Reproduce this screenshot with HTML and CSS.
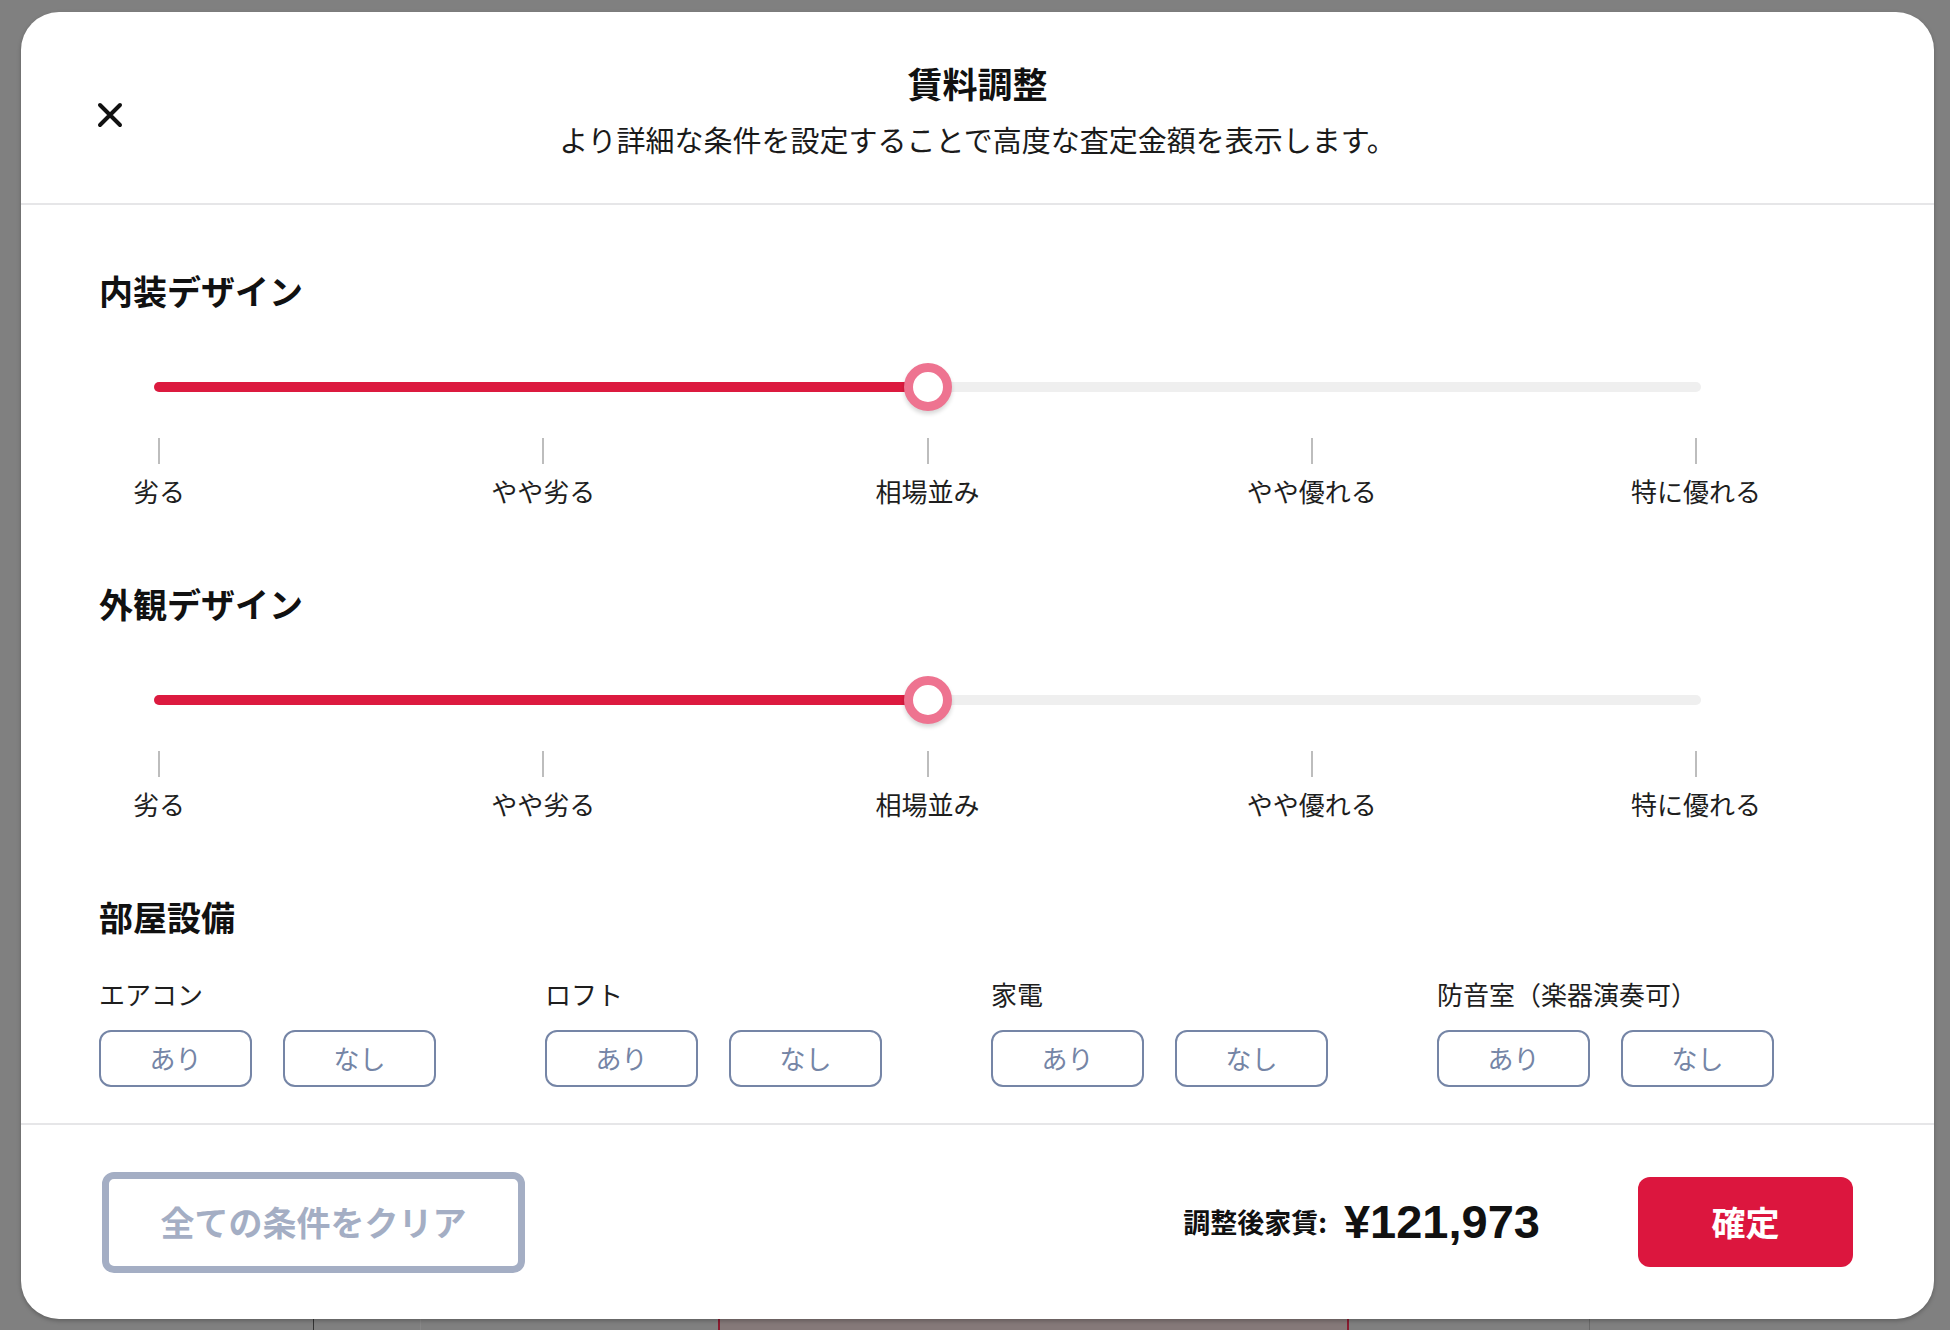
FILE: index.html
```html
<!DOCTYPE html>
<html lang="ja">
<head>
<meta charset="utf-8">
<title>賃料調整</title>
<link rel="stylesheet" href="styles.css">
</head>
<body>
<div class="overlay">
  <div class="modal">
    <header class="modal-header">
      <button class="close-btn" aria-label="閉じる">
        <svg width="26" height="26" viewBox="0 0 26 26"><path d="M3 3 L23 23 M23 3 L3 23" stroke="#111" stroke-width="4" stroke-linecap="round" fill="none"/></svg>
      </button>
      <div class="header-text">
        <h1 class="title">賃料調整</h1>
        <p class="subtitle">より詳細な条件を設定することで高度な査定金額を表示します。</p>
      </div>
      <div class="header-spacer"></div>
    </header>

    <main class="modal-body">
      <section class="section">
        <h2 class="section-title">内装デザイン</h2>
        <div class="slider">
          <div class="track"><div class="fill" style="width:50%"></div></div>
          <div class="thumb" style="left:50%"></div>
        </div>
        <div class="ticks">
          <div class="tick"><span class="tick-line"></span><span class="tick-label">劣る</span></div>
          <div class="tick"><span class="tick-line"></span><span class="tick-label">やや劣る</span></div>
          <div class="tick"><span class="tick-line"></span><span class="tick-label">相場並み</span></div>
          <div class="tick"><span class="tick-line"></span><span class="tick-label">やや優れる</span></div>
          <div class="tick"><span class="tick-line"></span><span class="tick-label">特に優れる</span></div>
        </div>
      </section>

      <section class="section">
        <h2 class="section-title">外観デザイン</h2>
        <div class="slider">
          <div class="track"><div class="fill" style="width:50%"></div></div>
          <div class="thumb" style="left:50%"></div>
        </div>
        <div class="ticks">
          <div class="tick"><span class="tick-line"></span><span class="tick-label">劣る</span></div>
          <div class="tick"><span class="tick-line"></span><span class="tick-label">やや劣る</span></div>
          <div class="tick"><span class="tick-line"></span><span class="tick-label">相場並み</span></div>
          <div class="tick"><span class="tick-line"></span><span class="tick-label">やや優れる</span></div>
          <div class="tick"><span class="tick-line"></span><span class="tick-label">特に優れる</span></div>
        </div>
      </section>

      <section class="section">
        <h2 class="section-title">部屋設備</h2>
        <div class="equip-grid">
          <div class="equip">
            <div class="equip-label">エアコン</div>
            <div class="equip-btns"><button class="opt">あり</button><button class="opt">なし</button></div>
          </div>
          <div class="equip">
            <div class="equip-label">ロフト</div>
            <div class="equip-btns"><button class="opt">あり</button><button class="opt">なし</button></div>
          </div>
          <div class="equip">
            <div class="equip-label">家電</div>
            <div class="equip-btns"><button class="opt">あり</button><button class="opt">なし</button></div>
          </div>
          <div class="equip">
            <div class="equip-label">防音室（楽器演奏可）</div>
            <div class="equip-btns"><button class="opt">あり</button><button class="opt">なし</button></div>
          </div>
        </div>
      </section>
    </main>

    <footer class="modal-footer">
      <button class="clear-btn">全ての条件をクリア</button>
      <div class="footer-right">
        <div class="price"><span class="price-label">調整後家賃:</span><span class="price-value">¥121,973</span></div>
        <button class="confirm-btn">確定</button>
      </div>
    </footer>
  </div>
</div>
</body>
</html>
```
FILE: styles.css
```css
* { box-sizing: border-box; }

html, body {
  margin: 0;
  padding: 0;
}

body {
  width: 1950px;
  height: 1330px;
  overflow: hidden;
  font-family: "Noto Sans CJK JP", "Noto Sans", sans-serif;
  color: #111;
  background-color: #808080;
  background-image:
    linear-gradient(to right, transparent 313px, #333 313px, #333 314px, transparent 314px),
    linear-gradient(to right, transparent 420px, #888 420px, #888 421px, transparent 421px),
    linear-gradient(to right, transparent 1589px, #6a6a6a 1589px, #6a6a6a 1590px, transparent 1590px),
    linear-gradient(to right, transparent 718px, #8a1c30 718px, #8a1c30 720px, #857979 720px, #857979 1347px, #8a1c30 1347px, #8a1c30 1349px, transparent 1349px);
  background-repeat: no-repeat;
  background-size: 100% 12px;
  background-position: left bottom;
}

.overlay {
  padding: 12px 0 0 21px;
}

.modal {
  width: 1913px;
  height: 1307px;
  background: #fff;
  border-radius: 38px;
  box-shadow: 0 2px 4px rgba(0, 0, 0, 0.25);
  display: flex;
  flex-direction: column;
  overflow: hidden;
}

/* Header */
.modal-header {
  display: grid;
  grid-template-columns: 1fr auto 1fr;
  align-items: center;
  padding: 47px 76px 44px 76px;
  border-bottom: 2px solid #e6e6e8;
  flex: none;
}

.close-btn {
  justify-self: start;
  background: none;
  border: 0;
  padding: 0;
  width: 26px;
  height: 26px;
  margin-top: 12px;
  display: flex;
  cursor: pointer;
}

.header-text {
  display: flex;
  flex-direction: column;
  align-items: center;
  gap: 12px;
}

.title {
  margin: 0;
  font-size: 35px;
  line-height: 48px;
  font-weight: 700;
  color: #111;
}

.subtitle {
  margin: 0;
  font-size: 29px;
  line-height: 40px;
  font-weight: 400;
  color: #1a1a1a;
}

/* Body */
.modal-body {
  flex: 1;
  padding: 62px 0 0 78px;
  display: flex;
  flex-direction: column;
  gap: 71px;
}

.section {
  display: flex;
  flex-direction: column;
}

.section-title {
  margin: 0;
  font-size: 34px;
  line-height: 48px;
  font-weight: 700;
  color: #111;
}

.slider {
  position: relative;
  margin: 48px 0 0 55px;
  width: 1547px;
  height: 48px;
  display: flex;
  align-items: center;
}

.track {
  width: 100%;
  height: 10px;
  border-radius: 5px;
  background: #efefef;
  display: flex;
}

.fill {
  height: 100%;
  border-radius: 5px;
  background: #dc1a3f;
}

.thumb {
  position: absolute;
  top: 0;
  width: 48px;
  height: 48px;
  margin-left: -24px;
  border-radius: 50%;
  background: #fff;
  border: 9px solid #ee7390;
  box-shadow: 0 3px 4px rgba(0, 0, 0, 0.16);
}

.ticks {
  margin: 27px 0 0 60px;
  width: 1537px;
  display: flex;
  justify-content: space-between;
}

.tick {
  width: 0;
  display: flex;
  flex-direction: column;
  align-items: center;
}

.tick-line {
  display: block;
  width: 2px;
  height: 26px;
  background: #bdbdbd;
  flex: none;
}

.tick-label {
  margin-top: 9px;
  font-size: 26px;
  line-height: 36px;
  white-space: nowrap;
  color: #1e1e1e;
}

.equip-grid {
  margin-top: 35px;
  display: grid;
  grid-template-columns: repeat(4, 446px);
}

.equip {
  display: flex;
  flex-direction: column;
}

.equip-label {
  font-size: 26px;
  line-height: 36px;
  color: #1e1e1e;
  white-space: nowrap;
}

.equip-btns {
  margin-top: 18px;
  display: flex;
  gap: 31px;
}

.opt {
  width: 153px;
  height: 57px;
  border: 2px solid #7585a6;
  border-radius: 12px;
  background: #fff;
  color: #7585a6;
  font-family: "Noto Sans CJK JP", sans-serif;
  font-size: 26px;
  line-height: 1;
  padding: 0 0 2px;
  cursor: pointer;
}

/* Footer */
.modal-footer {
  flex: none;
  height: 196px;
  border-top: 2px solid #e6e6e8;
  padding: 0 81px;
  display: flex;
  align-items: center;
  justify-content: space-between;
}

.clear-btn {
  width: 423px;
  height: 101px;
  border: 7px solid #a4aec4;
  border-radius: 12px;
  background: #fff;
  color: #a4aec4;
  font-family: "Noto Sans CJK JP", sans-serif;
  font-size: 34px;
  font-weight: 700;
  padding: 0 0 2px;
  cursor: pointer;
}

.footer-right {
  display: flex;
  align-items: center;
  gap: 98px;
}

.price {
  display: flex;
  align-items: center;
  gap: 17px;
}

.price-label {
  font-size: 27px;
  line-height: 40px;
  font-weight: 700;
  color: #111;
}

.price-value {
  font-family: "Liberation Sans", Arial, sans-serif;
  font-size: 47px;
  line-height: 56px;
  font-weight: 700;
  color: #111;
}

.confirm-btn {
  width: 215px;
  height: 90px;
  border: 0;
  border-radius: 12px;
  background: #dc163e;
  color: #fff;
  font-family: "Noto Sans CJK JP", sans-serif;
  font-size: 34px;
  font-weight: 700;
  padding: 0 0 2px;
  cursor: pointer;
}
```
